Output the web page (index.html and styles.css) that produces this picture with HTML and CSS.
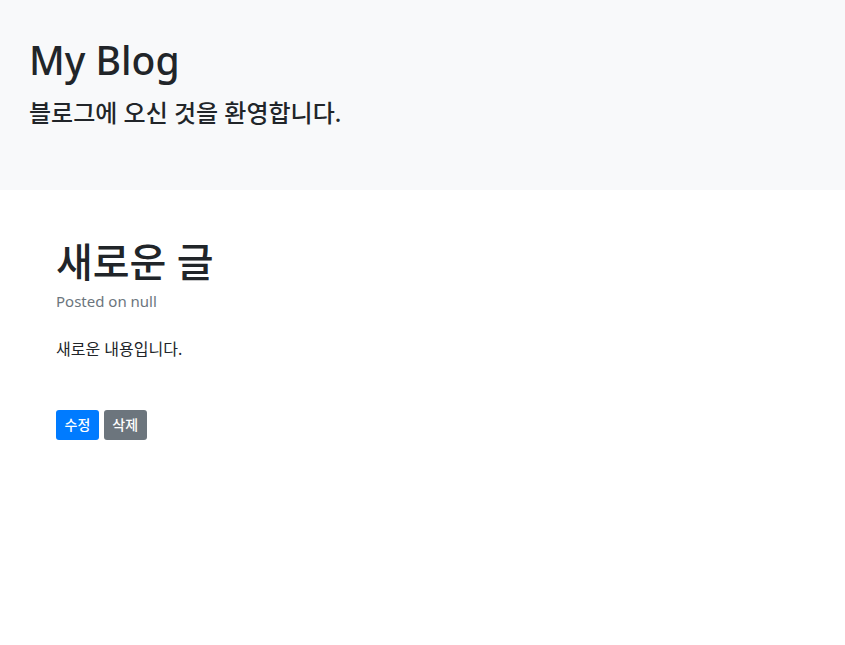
FILE: index.html
```html
<!DOCTYPE html>
<html lang="ko">
<head>
<meta charset="utf-8">
<title>My Blog</title>
<link rel="stylesheet" href="styles.css">
</head>
<body>
<header class="jumbotron">
  <h1 class="site-title">My Blog</h1>
  <p class="lead">블로그에 오신 것을 환영합니다.</p>
</header>
<main class="post">
  <h1 class="post-title">새로운 글</h1>
  <div class="meta">Posted on null</div>
  <p class="content">새로운 내용입니다.</p>
  <div class="actions">
    <button class="btn btn-primary">수정</button>
    <button class="btn btn-secondary">삭제</button>
  </div>
</main>
</body>
</html>
```
FILE: styles.css
```css
html, body {
  margin: 0;
  padding: 0;
}
body {
  font-family: "Noto Sans", "Noto Sans CJK KR", sans-serif;
  color: #212529;
  background: #fff;
  font-size: 16px;
  line-height: 1.5;
}
.jumbotron {
  background: #f8f9fa;
  height: 190px;
  box-sizing: border-box;
  padding: 37px 29px 0;
}
.site-title {
  margin: 0;
  font-size: 39px;
  font-weight: 500;
  line-height: 1.2;
}
.lead {
  margin: 12px 0 0;
  font-size: 24px;
  font-weight: 500;
  line-height: 1.4;
}
.post {
  padding: 44px 56px 32px;
}
.post-title {
  margin: 0;
  font-size: 40px;
  font-weight: 500;
  line-height: 1.4;
}
.meta {
  color: #6c757d;
  font-size: 15px;
  margin-top: 0;
}
.content {
  margin: 24px 0 0;
  font-size: 16px;
}
.actions {
  margin-top: 49px;
  display: flex;
  gap: 5px;
}
.btn {
  font-family: inherit;
  font-size: 14px;
  font-weight: 500;
  line-height: 20px;
  padding: 5px 8.5px;
  border: 0;
  border-radius: 3px;
  color: #fff;
}
.btn-primary { background: #007bff; }
.btn-secondary { background: #6c757d; }
```
